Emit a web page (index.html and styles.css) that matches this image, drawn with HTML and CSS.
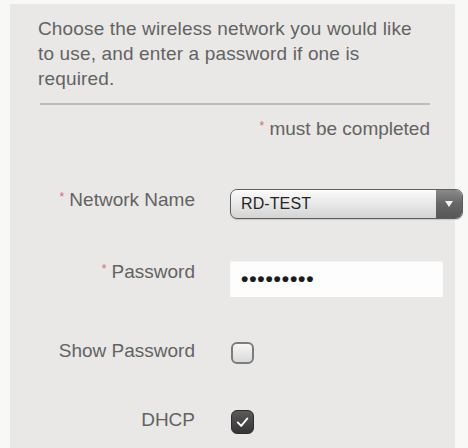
FILE: index.html
```html
<!DOCTYPE html>
<html>
<head>
<meta charset="utf-8">
<link rel="stylesheet" href="styles.css">
</head>
<body>
<div class="panel">
  <p class="intro">Choose the wireless network you would like to use, and enter a password if one is required.</p>
  <div class="divider"></div>
  <p class="note"><span class="req">*</span> must be completed</p>
  <div class="form">
    <div class="row row-net">
      <label class="lbl"><span class="req">*</span> Network Name</label>
      <div class="select">
        <span class="select-value">RD-TEST</span>
        <span class="select-btn"><span class="tri"></span></span>
      </div>
    </div>
    <div class="row row-pw">
      <label class="lbl"><span class="req">*</span> Password</label>
      <div class="input"><span class="dots">•••••••••</span></div>
    </div>
    <div class="row row-show">
      <label class="lbl">Show Password</label>
      <span class="check"></span>
    </div>
    <div class="row row-dhcp">
      <label class="lbl">DHCP</label>
      <span class="check checked">
        <svg viewBox="0 0 24 24" width="24" height="24"><path d="M6.5 12.5 L10.5 16.5 L17.5 8" fill="none" stroke="#fff" stroke-width="2.2" stroke-linecap="round" stroke-linejoin="round"/></svg>
      </span>
    </div>
  </div>
</div>
</body>
</html>
```

FILE: styles.css
```css
html, body {
  margin: 0;
  padding: 0;
  background: #f8f8f7;
  height: 100%;
  overflow: hidden;
}
body {
  font-family: "Liberation Sans", Arial, Helvetica, sans-serif;
  color: #636363;
}
.panel {
  margin: 4px 13px 0 10px;
  background: #e9e8e6;
  padding: 12px 25px 0 28px;
  height: 444px;
  box-sizing: border-box;
}
.intro {
  margin: 0;
  font-size: 19px;
  line-height: 25px;
  letter-spacing: 0.15px;
}
.divider {
  height: 2px;
  background: #bdbbb9;
  margin: 12px 0 0 2px;
}
.note {
  margin: 9px 0 0 0;
  text-align: right;
  font-size: 19px;
  line-height: 25px;
}
.req {
  color: #d06a7a;
  font-size: 12px;
  vertical-align: 5px;
}
.form {
  margin-top: 44px;
  display: flex;
  flex-direction: column;
}
.row {
  display: grid;
  grid-template-columns: 157px auto;
  column-gap: 35px;
  align-items: start;
}
.row-pw { margin-top: 38px; }
.row-show { margin-top: 41px; }
.row-dhcp { margin-top: 43px; }
.lbl {
  text-align: right;
  font-size: 19px;
  line-height: 25px;
  white-space: nowrap;
}
.select {
  margin-top: 4px;
  width: 233px;
  height: 30px;
  box-sizing: border-box;
  border: 1px solid #5f5f5f;
  border-radius: 7px;
  background: linear-gradient(#fbfbfb, #e6e6e6 55%, #d4d4d4);
  box-shadow: inset 0 1px 0 #fff, 0 1px 1px rgba(0,0,0,0.15);
  display: flex;
  align-items: center;
  overflow: hidden;
}
.select-value {
  flex: 1;
  padding-left: 10px;
  font-size: 16px;
  color: #262626;
  letter-spacing: 0.1px;
}
.select-btn {
  width: 26px;
  align-self: stretch;
  background: linear-gradient(#8a8a8a, #666 50%, #575757);
  display: flex;
  align-items: center;
  justify-content: center;
}
.tri {
  width: 0;
  height: 0;
  border-left: 4px solid transparent;
  border-right: 4px solid transparent;
  border-top: 6px solid #f4f4f4;
}
.input {
  margin-top: 4px;
  width: 213px;
  height: 36px;
  background: #fdfdfd;
  box-shadow: inset 0 1px 2px rgba(0,0,0,0.06);
  display: flex;
  align-items: center;
  padding-left: 11px;
  box-sizing: border-box;
}
.dots {
  font-size: 21px;
  font-weight: bold;
  letter-spacing: 0.8px;
  color: #1c1c1c;
}
.check {
  margin-top: 4px;
  margin-left: 1px;
  width: 23px;
  height: 22px;
  box-sizing: border-box;
  border: 2px solid #7c7c7c;
  border-radius: 6px;
  background: linear-gradient(#f6f6f6, #dadada);
  display: flex;
  align-items: center;
  justify-content: center;
}
.check.checked {
  margin-top: 3px;
  height: 24px;
  border: 1px solid #2e2e2e;
  background: linear-gradient(#5a5a5a, #353535);
}
.check svg { display: block; }
```
